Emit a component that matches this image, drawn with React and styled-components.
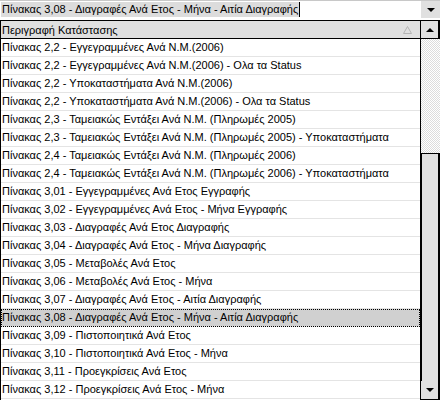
import styled, { createGlobalStyle } from "styled-components";

const GlobalStyle = createGlobalStyle`
  html, body {
    margin: 0;
    padding: 0;
    background: #fff;
    overflow: hidden;
  }
  body {
    font-family: "Liberation Sans", Arial, sans-serif;
    font-size: 11px;
    color: #000;
  }
`;

const rows = [
  "Πίνακας 2,2 - Εγγεγραμμένες Ανά Ν.Μ.(2006)",
  "Πίνακας 2,2 - Εγγεγραμμένες Ανά Ν.Μ.(2006) - Ολα τα Status",
  "Πίνακας 2,2 - Υποκαταστήματα Ανά Ν.Μ.(2006)",
  "Πίνακας 2,2 - Υποκαταστήματα Ανά Ν.Μ.(2006) - Ολα τα Status",
  "Πίνακας 2,3 - Ταμειακώς Εντάξει Ανά Ν.Μ. (Πληρωμές 2005)",
  "Πίνακας 2,3 - Ταμειακώς Εντάξει Ανά Ν.Μ. (Πληρωμές 2005) - Υποκαταστήματα",
  "Πίνακας 2,4 - Ταμειακώς Εντάξει Ανά Ν.Μ. (Πληρωμές 2006)",
  "Πίνακας 2,4 - Ταμειακώς Εντάξει Ανά Ν.Μ. (Πληρωμές 2006) - Υποκαταστήματα",
  "Πίνακας 3,01 - Εγγεγραμμένες Ανά Ετος Εγγραφής",
  "Πίνακας 3,02 - Εγγεγραμμένες Ανά Ετος - Μήνα Εγγραφής",
  "Πίνακας 3,03 - Διαγραφές Ανά Ετος Διαγραφής",
  "Πίνακας 3,04 - Διαγραφές Ανά Ετος - Μήνα Διαγραφής",
  "Πίνακας 3,05 - Μεταβολές Ανά Ετος",
  "Πίνακας 3,06 - Μεταβολές Ανά Ετος - Μήνα",
  "Πίνακας 3,07 - Διαγραφές Ανά Ετος - Αιτία Διαγραφής",
  "Πίνακας 3,08 - Διαγραφές Ανά Ετος - Μήνα - Αιτία Διαγραφής",
  "Πίνακας 3,09 - Πιστοποιητικά Ανά Ετος",
  "Πίνακας 3,10 - Πιστοποιητικά Ανά Ετος - Μήνα",
  "Πίνακας 3,11 - Προεγκρίσεις Ανά Ετος",
  "Πίνακας 3,12 - Προεγκρίσεις Ανά Ετος - Μήνα",
];

const selectedIndex = 15;

const Frame = styled.div`
  width: 440px;
  height: 400px;
  display: flex;
  flex-direction: column;
  overflow: hidden;
`;

const Combo = styled.div`
  height: 20px;
  flex: none;
  box-sizing: border-box;
  border-top: 1px solid #c8c8c8;
  display: flex;
`;

const ComboText = styled.div`
  flex: 1;
  padding: 1px 0 0 1px;
`;

const Selection = styled.span`
  display: inline-block;
  background: #dcdcdc;
  line-height: 15px;
  padding: 0 1px;
  border-right: 1px solid #000;
`;

const ArrowButton = styled.div`
  width: 19px;
  height: ${(p) => p.h}px;
  flex: none;
  box-sizing: border-box;
  background: #e0e0e0;
  display: flex;
  align-items: center;
  justify-content: center;
  border-right: ${(p) => (p.dark ? "2px solid #000" : "none")};
  border-bottom: ${(p) => (p.dark ? "1px solid #000" : "none")};
`;

const Triangle = styled.div`
  width: 0;
  height: 0;
  border-left: 4px solid transparent;
  border-right: 4px solid transparent;
  border-${(p) => (p.up ? "bottom" : "top")}: 4px solid #000;
`;

const ListBox = styled.div`
  flex: 1;
  display: flex;
  border-top: 1px solid #000;
  border-left: 1px solid #000;
  min-height: 0;
`;

const ListColumn = styled.div`
  flex: 1;
  display: flex;
  flex-direction: column;
  overflow: hidden;
  border-right: 1px solid #000;
`;

const Header = styled.div`
  height: 18px;
  flex: none;
  box-sizing: border-box;
  background: #e0e0e0;
  border-bottom: 1px solid #000;
  display: flex;
  align-items: center;
  justify-content: space-between;
  padding: 0 8px 0 1px;
`;

const SortMark = styled.svg`
  width: 9px;
  height: 8px;
`;

const Row = styled.div`
  height: 18px;
  flex: none;
  box-sizing: border-box;
  border-bottom: 1px solid #e4e4e4;
  padding: 0 0 0 1px;
  line-height: 17px;
  white-space: nowrap;
  background: ${(p) => (p.selected ? "#d0d0d0" : "#fff")};
  outline: ${(p) => (p.selected ? "1px dotted #000" : "none")};
  outline-offset: -1px;
`;

const ScrollBar = styled.div`
  width: 19px;
  flex: none;
  display: flex;
  flex-direction: column;
`;

const Track = styled.div`
  flex: 1;
  background: repeating-conic-gradient(#fff 0 25%, #dcdcdc 0 50%) 0 0 / 2px 2px;
`;

const Thumb = styled.div`
  height: 228px;
  flex: none;
  box-sizing: border-box;
  background: #e0e0e0;
  border-left: 1px solid #000;
  border-top: 1px solid #000;
  border-right: 2px solid #000;
`;

export default function App() {
  return (
    <Frame>
      <GlobalStyle />
      <Combo>
        <ComboText>
          <Selection>Πίνακας 3,08 - Διαγραφές Ανά Ετος - Μήνα - Αιτία Διαγραφής</Selection>
        </ComboText>
        <ArrowButton h={17}>
          <Triangle />
        </ArrowButton>
      </Combo>
      <ListBox>
        <ListColumn>
          <Header>
            <span>Περιγραφή Κατάστασης</span>
            <SortMark viewBox="0 0 9 8">
              <path d="M4.5 0.5 L8.5 7.5 L0.5 7.5 Z" fill="none" stroke="#b4b4b4" strokeWidth="1" />
            </SortMark>
          </Header>
          {rows.map((r, i) => (
            <Row key={i} selected={i === selectedIndex}>
              {r}
            </Row>
          ))}
        </ListColumn>
        <ScrollBar>
          <ArrowButton h={18} dark>
            <Triangle up />
          </ArrowButton>
          <Track />
          <Thumb />
          <ArrowButton h={19} dark>
            <Triangle />
          </ArrowButton>
        </ScrollBar>
      </ListBox>
    </Frame>
  );
}
